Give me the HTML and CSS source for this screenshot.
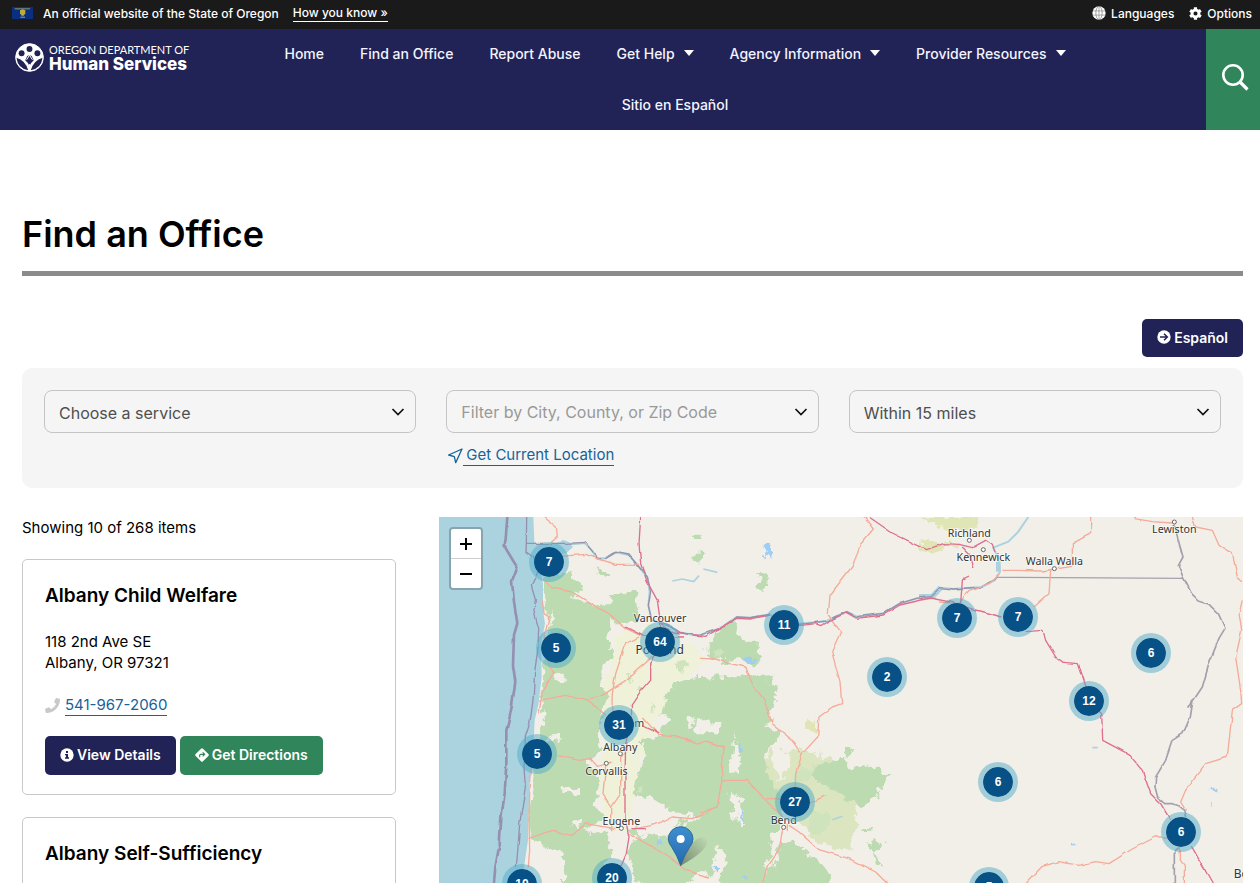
FILE: index.html
```html
<!DOCTYPE html>
<html lang="en">
<head>
<meta charset="utf-8">
<meta name="viewport" content="width=device-width, initial-scale=1">
<title>Find an Office</title>
<link rel="stylesheet" href="styles.css">
</head>
<body>
<div class="topbar">
  <svg class="flag" viewBox="0 0 63 36" aria-hidden="true"><rect width="63" height="36" fill="#0b2f80"/><path d="M8 4h46v3H8z" fill="#8f9a6b"/><path d="M24 10l8-3 8 3v9l-5 7h-6l-5-7z" fill="#b9ac3c"/><path d="M25 29h14v3H25z" fill="#a9a550"/></svg>
  <span>An official website of the State of Oregon</span>
  <button class="know" type="button">How you know »</button>
  <div class="tools">
    <button class="tool" type="button"><svg class="globe" viewBox="0 0 40 40" aria-hidden="true"><circle cx="20" cy="20" r="19" fill="#fff"/><path d="M20 1v38M2 14h36M2 26h36" fill="none" stroke="#8a8a8a" stroke-width="2"/><ellipse cx="20" cy="20" rx="9" ry="19" fill="none" stroke="#777" stroke-width="2"/></svg>Languages</button>
    <button class="tool" type="button"><svg class="gear" viewBox="0 0 512 512" aria-hidden="true"><path fill="#fff" fill-rule="evenodd" d="M487 316l-43-25q6-35 0-70l43-25q8-5 5-14-17-54-55-96-6-7-14-2l-43 25q-27-23-61-35V24q0-9-9-11-55-12-111 0-8 2-8 11v50q-34 12-61 35L87 84q-8-5-14 2-38 42-55 96-3 9 5 14l43 25q-6 35 0 70l-43 25q-8 5-5 14 17 54 55 96 6 7 14 2l43-25q27 23 61 35v50q0 9 8 11 56 12 111 0 9-2 9-11v-50q34-12 61-35l43 25q8 5 14-2 38-42 55-96 3-9-5-14zM256 336a80 80 0 1 1 0-160 80 80 0 0 1 0 160z"/></svg>Options</button>
  </div>
</div>
<header class="header">
  <a class="logo" href="#">
    <svg class="logo-mark" viewBox="0 0 88 88" aria-hidden="true"><circle cx="44" cy="44" r="42" fill="#fff"/><g fill="#212356"><circle cx="44" cy="18" r="9"/><circle cx="20" cy="31" r="9"/><circle cx="68" cy="31" r="9"/><path d="M4 45q28 8 36 38Q9 78 4 45zM84 45q-28 8-36 38 31-5 36-38zM44 37q8 0 9 8l4 7q-9 7-13 18-4-11-13-18l4-7q1-8 9-8z"/></g><path d="M44 37l-9 14M44 37l9 14M44 64v20" stroke="#fff" stroke-width="3" fill="none"/><circle cx="44" cy="44" r="42" fill="none" stroke="#fff" stroke-width="3"/></svg>
    <span class="logo-text"><span class="logo-top">OREGON DEPARTMENT OF</span><span class="logo-main">Human Services</span></span>
  </a>
  <nav class="nav">
    <a href="#">Home</a>
    <a href="#">Find an Office</a>
    <a href="#">Report Abuse</a>
    <a href="#">Get Help<span class="caret"></span></a>
    <a href="#">Agency Information<span class="caret"></span></a>
    <a href="#">Provider Resources<span class="caret"></span></a>
    <a href="#">Sitio en Español</a>
  </nav>
  <button class="search" type="button" aria-label="Search"><svg viewBox="0 0 27 27" aria-hidden="true"><circle cx="11" cy="11" r="9.7" fill="none" stroke="#fff" stroke-width="2.6"/><path d="M18 18l7.5 7.5" stroke="#fff" stroke-width="3.2"/></svg></button>
</header>
<main class="main">
  <h1>Find an Office</h1>
  <div class="actions"><a class="btn" href="#"><svg viewBox="0 0 42 42" aria-hidden="true"><circle cx="21" cy="21" r="20" fill="#fff"/><path d="M9 21h22M21 11l10 10-10 10" fill="none" stroke="#212356" stroke-width="4.5"/></svg>Español</a></div>
  <form class="filters">
    <div class="field">
      <select aria-label="Service"><option>Choose a service</option></select>
      <svg class="chev" viewBox="0 0 14 8" aria-hidden="true"><path d="M1.500 1L7 6.500 12.500 1" fill="none" stroke="#111" stroke-width="1.700"/></svg>
    </div>
    <div class="field">
      <input type="text" aria-label="Place" placeholder="Filter by City, County, or Zip Code">
      <svg class="chev" viewBox="0 0 14 8" aria-hidden="true"><path d="M1.500 1L7 6.500 12.500 1" fill="none" stroke="#111" stroke-width="1.700"/></svg>
      <a class="locate" href="#"><svg viewBox="0 0 48 48" aria-hidden="true"><path d="M45 3L5 21l17 5 4 18z" fill="none" stroke="#14639a" stroke-width="4" stroke-linejoin="round"/></svg><span class="locate-text">Get Current Location</span></a>
    </div>
    <div class="field">
      <select aria-label="Distance"><option>Within 15 miles</option></select>
      <svg class="chev" viewBox="0 0 14 8" aria-hidden="true"><path d="M1.500 1L7 6.500 12.500 1" fill="none" stroke="#111" stroke-width="1.700"/></svg>
    </div>
  </form>
  <div class="results">
    <section class="list">
      <p class="count">Showing 10 of 268 items</p>
      <article class="card">
        <h2>Albany Child Welfare</h2>
        <p class="address">118 2nd Ave SE<br>Albany, OR 97321</p>
        <p class="phone"><svg viewBox="0 0 512 512" aria-hidden="true"><path fill="#c9c9c9" d="M493 25L389 1q-18-4-26 13l-48 112q-6 16 7 28l60 50q-54 115-178 178l-50-60q-12-13-28-7L14 363q-17 8-13 26l24 104q4 19 24 19C305 512 512 305 512 49q0-20-19-24z"/></svg><a href="#">541-967-2060</a></p>
        <div class="buttons">
          <a class="btn" href="#"><svg viewBox="0 0 42 42" aria-hidden="true"><circle cx="21" cy="21" r="20" fill="#fff"/><path d="M18 9h6v6h-6zM15 18h9v10h3v4H15v-4h3v-6h-3z" fill="#212356"/></svg>View Details</a>
          <a class="btn green" href="#"><svg viewBox="0 0 42 42" aria-hidden="true"><path d="M21 1q2 0 3 1l16 16q3 3 0 6L24 40q-3 3-6 0L2 24q-3-3 0-6L18 2q1-1 3-1z" fill="#fff"/><path d="M14 28v-6q0-3 3-3h11M23 13l6 6-6 6" fill="none" stroke="#31855a" stroke-width="3.500"/></svg>Get Directions</a>
        </div>
      </article>
      <article class="card">
        <h2>Albany Self-Sufficiency</h2>
        <p class="address">&nbsp;</p>
      </article>
    </section>
    <section class="map" aria-label="Office map">
      <div class="canvas">
      <svg class="tiles" viewBox="0 0 2412 1098" aria-hidden="true">
        <defs>
          <filter id="rough" x="-5%" y="-5%" width="110%" height="110%"><feTurbulence type="fractalNoise" baseFrequency="0.035" numOctaves="4" seed="4"/><feDisplacementMap in="SourceGraphic" scale="46" xChannelSelector="R" yChannelSelector="G"/></filter>
          <filter id="wobble" x="-5%" y="-5%" width="110%" height="110%"><feTurbulence type="fractalNoise" baseFrequency="0.03" numOctaves="1" seed="9"/><feDisplacementMap in="SourceGraphic" scale="12" xChannelSelector="R" yChannelSelector="G"/></filter>
          <linearGradient id="pin" x1="0" y1="0" x2="0" y2="1"><stop offset="0" stop-color="#3f8fd0"/><stop offset="1" stop-color="#2369ad"/></linearGradient>
          <linearGradient id="shade" x1="0" y1="1" x2="1" y2="0"><stop offset="0" stop-color="#333" stop-opacity=".5"/><stop offset="1" stop-color="#333" stop-opacity="0"/></linearGradient>
        </defs>
        <rect width="2412" height="1098" fill="#f2efe9"/>
        <!-- valley farmland -->
        <g filter="url(#rough)" fill="#eff1d8">
          <path d="M530 350L600 345 640 320 700 350 780 400 800 440 740 480 680 530 660 600 640 660 600 730 590 850 560 950 500 920 480 780 500 650 480 560 520 440z"/>
          <path d="M990 700L1090 690 1180 730 1260 840 1240 1000 1140 980 1020 860 970 780z" fill="#dbe5bf"/>
          <path d="M1095 605h30v42h-30zM1440 0h170l10 30-70 10-80-20zM1440 80l70-8 50 16-60 8-60 14z" fill="#dfe5b4"/>
        </g>
        <!-- forests -->
        <g filter="url(#rough)" fill="#bddbb1">
          <path d="M318 184L355 164 402 174 412 200 445 210 400 235 442 256 480 272 520 262 512 240 570 220 600 232 590 270 600 310 540 320 510 300 512 370 520 420 490 450 490 500 510 540 490 600 470 650 480 690 450 740 480 800 470 870 500 900 440 940 500 955 520 1000 500 1050 480 1110 375 1110 375 1010 300 980 272 960 274 870 280 800 290 720 300 620 304 560 316 440 330 320 315 240z"/>
          <path d="M476 156h34v18h-34zM955 165h30v20h10l-12 36h-20z"/>
          <path d="M803 384L870 314 890 312 896 345 915 370 962 374 964 444 930 450 900 424 850 434 803 414z"/>
          <path d="M655 590L690 520 720 500 783 480 850 482 1000 470 1012 560 990 590 985 630 1020 650 975 710 985 760 1015 820 1030 900 1010 960 1000 1110 860 1110 800 1060 720 1110 600 1110 560 1000 600 960 560 940 620 910 700 920 790 900 720 890 650 850 580 830 590 790 620 720 610 670 655 660 690 600z"/>
          <path d="M1143 740L1215 726 1235 760 1283 742 1320 760 1348 780 1320 815 1310 850 1273 870 1230 850 1180 810 1120 790z"/>
          <path d="M1040 960L1160 1050 1185 1110 980 1110zM1270 930h30v14h-30zM1290 970l50 10-40 30 40 30-30 8z"/>
          <path d="M770 100h22v30h-22zM765 50h20v18h-20zM1210 690l34 8-22 30z"/>
        </g>
        <g filter="url(#rough)" fill="#cfe3bd">
          <path d="M560 470l20 8-10 14zM600 500l14 20-20 6zM700 440l30-10 20 14-30 16zM640 560l10 20-16 8zM530 600l16 20-14 10zM600 800l10 20-20 10zM820 400l40 10-20 20zM1080 740l60 20-30 40-40-10zM1120 880l60 20-30 60-50-20z"/>
        </g>
        <g filter="url(#rough)" fill="#f2efe9">
          <path d="M283 985L370 1005 375 1060 340 1110 270 1110zM370 810h50v18h-50zM770 616h70v30h-70zM340 280l10 30-20 4zM350 470h30v22h-30zM335 655h30v18h-30zM295 590h22v30h-22zM885 650l20 80-10 50-18-20zM870 820l36 30 10 80-20 0-16-70zM600 880l90 15 50 40-80 30-70-20zM1010 660l50 70-40 60-20-60zM400 912h28v20h-28z"/>
          <path d="M1010 940l25 20-30 70-30 50 20-90zM830 980l30 40-20 80-20-10zM740 600h24v20h-24z"/>
        </g>
        <!-- ocean -->
        <path d="M0 0H283L286 75 310 85 380 72 402 90 380 110 300 110 302 150 312 200 312 280 318 320 306 380 308 480 298 564 287 610 282 719 272 799 269 880 267 970 255 1050 242 1098H0z" fill="#aad3df"/>
        <g fill="none" stroke="#aad3df" stroke-linejoin="round">
          <path d="M350 90L372 72 400 82 438 78 458 100 475 124 500 124 530 106 570 114 600 150 625 180 632 224 628 265 638 310 690 326 720 346 777 356 843 334 893 300 933 302 993 292 1033 324 1130 316 1163 312 1223 284 1253 299 1333 289 1383 259 1433 244 1473 239 1503 212 1543 216 1628 210 1668 189 1683 164 1678 124 1663 92 1708 74 1738 44 1768 0" stroke-width="6"/>
          <path d="M1440 239L1480 239 1505 212" stroke-width="16"/>
          <path d="M1678 164v-30" stroke-width="14"/>
        </g>
        <g filter="url(#rough)" fill="#9fcdf5">
          <path d="M966 90l20-6 14 16-8 26-18-12zM916 420h26v24h-26zM783 100l14 4-6 10zM896 690h16v16h-16zM903 870l12 40-4 20-10-20zM830 1050h10v14h-10zM910 1065l16 8-10 12zM650 970h18v8h-18zM2315 812h20v10h-20zM2320 855h4v20h-4zM1895 978h8v8h-8z"/>
        </g>
        <path d="M700 192l30-6 34 8 16-18M793 156l42 10M1960 692h16M1180 908l30-10" fill="none" stroke="#aad3df" stroke-width="5"/>
        <!-- borders -->
        <g filter="url(#wobble)" fill="none" stroke-linejoin="round">
          <path d="M205 0L200 64 197 89 235 152 219 194 225 254 235 319 225 354 222 444 229 494 219 564 212 600 202 640 202 740 197 830 187 900 182 980 169 1050 165 1098" stroke="#9590b0" stroke-width="8"/>
          <path d="M263 0L262 79 261 104 287 124 302 154 287 184 277 204 289 244 285 284 299 334 297 394 287 464 282 550 272 620 259 660 255 750 259 810 242 920 237 990 232 1050" stroke="#9590b0" stroke-width="4"/>
          <path d="M262 79H380L438 76 458 100 480 126 500 124 530 106 570 114 600 150 625 180 635 224 628 265 638 310 690 326 720 346 777 356 843 334 893 300 933 302 993 292M1080 322L1163 312 1223 284 1253 299 1333 289 1383 259 1433 244 1473 239 1503 212 1543 216 1628 210 1673 182" stroke="#9492ad" stroke-width="4"/>
          <path d="M2203 10L2218 70 2232 120 2218 146 2233 182 2258 230 2280 252 2310 262 2338 290 2358 334 2340 364 2310 440 2290 510 2250 570 2262 549 2254 600 2232 650 2200 670 2180 730 2150 780 2148 810 2156 840 2180 860 2200 860 2216 866 2234 880 2240 900M2222 995L2206 1010V1098" stroke="#a4a0ae" stroke-width="5"/>
        </g>
        <path d="M1673 181L2233 184" stroke="#a4a0ae" stroke-width="4"/>
        <!-- trunk roads -->
        <g filter="url(#wobble)" fill="none" stroke="#f5ab99" stroke-width="4" stroke-linejoin="round">
          <path d="M315 0L352 30 355 60 330 82M335 120L440 112 480 126 530 142 600 142M318 190L335 212 400 225 460 262 510 290 560 334 610 358M310 250L315 290 330 300 318 350 322 420 345 470 310 520 300 590M300 550L380 535 440 550 490 535 560 490 640 420M600 360L560 380 530 470 520 530 518 600M440 549L500 590"/>
          <path d="M1275 0L1303 36 1263 84 1243 144 1173 234 1168 294 1205 344 1178 404 1203 494 1208 560 1180 570 1140 600 1136 660 1090 710 1070 770 1067 860M975 549L1000 620 1060 670 1085 706M783 424L830 426 870 440 920 450 940 500 975 549M610 600L660 655 720 660 780 680 800 672 855 690 848 770 848 790 925 790 990 860 1032 900M848 790L835 870 783 886M783 680L740 670M970 844L1030 846M1110 860L1160 836M1050 925L1080 945 1140 998 1230 1025 1310 1065 1350 1105M1032 930L1020 1000 985 1050 970 1100M1045 920v22"/>
          <path d="M355 715L420 730 455 725 475 748 520 735M500 745L492 830 518 870 545 830 545 720 560 710M268 965L340 940 400 955 440 920 530 935M278 745L272 830 270 900 272 1000 268 1050M590 935L640 925 700 900 760 905 810 885M570 950L640 990 690 1020 740 1060 810 1080M518 870V940"/>
          <path d="M2082 4L2140 14 2200 18M2260 0L2270 30 2320 40 2340 85 2380 110 2395 180 2412 195M2410 250L2400 290 2408 340 2390 420 2405 520 2408 560 2380 580 2365 720 2300 740 2260 790 2240 820 2225 855 2240 880M1955 0V50L1900 80V150M1690 160L1730 160 1810 162 1900 148M1835 160L1830 230 1785 270M1500 255L1560 260 1590 220 1650 200 1680 170M1762 1098L1810 1048 1860 1034 1920 1045 1970 1034 2010 1040 2080 996 2150 960 2190 960M2224 980V1030L2236 1045V1098"/>
        </g>
        <!-- motorways -->
        <g filter="url(#wobble)" fill="none" stroke="#de6f8d" stroke-width="4" stroke-linejoin="round">
          <path d="M605 0L600 80 605 140 625 195 655 250 665 320 660 400 635 440 635 490 600 530 577 564 578 600 560 680 558 780 558 900 570 960 562 1010 545 1050M665 320L700 345 800 358 893 304 933 306 993 294M1080 326L1130 320 1145 326 1163 315 1223 287 1253 304 1333 294 1383 264 1473 243 1540 256 1598 276 1690 300M560 330L615 358 735 360M1290 0L1360 48 1463 98 1513 80 1560 82 1600 92 1640 70 1660 85 1668 105M1565 260L1570 190 1590 180M1570 90L1590 110 1605 150M1760 344L1812 340 1820 370 1850 420 1873 436 1918 440 1935 490 1955 560 1988 590 1991 670 2070 712 2110 760 2135 830 2165 860 2195 910M2256 985L2290 1045 2320 1098M610 625L660 650M580 935H620"/>
        </g>
        <g fill="#fff" stroke="#666" stroke-width="3">
          <circle cx="544" cy="710" r="6"/><circle cx="502" cy="739" r="6"/><circle cx="547" cy="934" r="6"/><circle cx="1034" cy="931" r="6"/><circle cx="1591" cy="70" r="6"/><circle cx="1633" cy="98" r="6"/><circle cx="1846" cy="155" r="6"/><circle cx="2206" cy="15" r="6"/>
        </g>
        <g class="places">
          <text x="663" y="314">Vancouver</text>
          <text x="662" y="410" font-size="36">Portland</text>
          <text x="570" y="629">Salem</text>
          <text x="544" y="701">Albany</text>
          <text x="502" y="774">Corvallis</text>
          <text x="547" y="923">Eugene</text>
          <text x="1034" y="920">Bend</text>
          <text x="1591" y="59">Richland</text>
          <text x="1633" y="132">Kennewick</text>
          <text x="1846" y="143">Walla Walla</text>
          <text x="2206" y="49">Lewiston</text>
          <text x="2430" y="1082" font-size="36">Boise</text>
        </g>
        <path d="M725 1046Q740 990 775 965 800 955 805 975 800 1005 725 1046z" fill="url(#shade)"/>
        <path d="M725 1046Q715 1016 699 992 688 978 688 966A37 37 0 0 1 762 966Q762 978 751 992 735 1016 725 1046z" fill="url(#pin)" stroke="#2e6c97" stroke-width="3"/>
        <circle cx="725" cy="966" r="12" fill="#fff"/>
      </svg>
      <button class="cluster" style="left:110px;top:45px">7</button>
      <button class="cluster" style="left:117px;top:131px">5</button>
      <button class="cluster" style="left:221px;top:125px">64</button>
      <button class="cluster" style="left:345px;top:108px">11</button>
      <button class="cluster" style="left:448px;top:160px">2</button>
      <button class="cluster" style="left:518px;top:101px">7</button>
      <button class="cluster" style="left:579px;top:100px">7</button>
      <button class="cluster" style="left:712px;top:136px">6</button>
      <button class="cluster" style="left:650px;top:184px">12</button>
      <button class="cluster" style="left:180px;top:208px">31</button>
      <button class="cluster" style="left:98px;top:237px">5</button>
      <button class="cluster" style="left:356px;top:285px">27</button>
      <button class="cluster" style="left:559px;top:265px">6</button>
      <button class="cluster" style="left:742px;top:315px">6</button>
      <button class="cluster" style="left:83px;top:367px">10</button>
      <button class="cluster" style="left:173px;top:361px">20</button>
      <button class="cluster" style="left:550px;top:370px">5</button>
      </div>
      <div class="zoom"><button type="button" aria-label="Zoom in"><svg viewBox="0 0 14 14" aria-hidden="true"><path d="M7 1v12M1 7h12" stroke="#000" stroke-width="2"/></svg></button><button type="button" aria-label="Zoom out"><svg viewBox="0 0 14 14" aria-hidden="true"><path d="M1 7h12" stroke="#000" stroke-width="2"/></svg></button></div>
    </section>
  </div>
</main>
</body>
</html>
```
FILE: styles.css
```css
* { box-sizing: border-box; }
body {
  margin: 0;
  height: 100vh;
  overflow: hidden;
  display: flex;
  flex-direction: column;
  background: #fff;
  color: #000;
  font-family: Inter, "Liberation Sans", sans-serif;
  font-size: 15px;
  line-height: 21px;
}
button { font: inherit; color: inherit; border: 0; padding: 0; background: none; cursor: pointer; }
h1, h2, p { margin: 0; }
a { text-decoration: none; }

.topbar {
  flex: none;
  display: flex;
  align-items: center;
  height: 29px;
  padding: 0 8px 3px 12px;
  background: #1a1a1a;
  color: #fff;
  font-size: 12px;
  font-weight: 500;
  line-height: 17px;
}
.flag { width: 21px; height: 12px; margin-right: 10px; }
.know { margin-left: 14px; border-bottom: 1px solid #fff; }
.tools { display: flex; gap: 15px; margin-left: auto; }
.tool { display: flex; align-items: center; gap: 5px; }
.globe { width: 14px; height: 14px; }
.gear { width: 13px; height: 13px; }

.header { flex: none; display: flex; background: #212356; color: #f4f4ff; }
.logo { flex: none; display: flex; align-items: flex-start; width: 222px; padding: 14px 0 0 15px; color: #fff; }
.logo-mark { width: 29px; height: 29px; margin-right: 5px; }
.logo-text { display: flex; flex-direction: column; font-family: Lato, sans-serif; }
.logo-top { font-size: 11px; line-height: 14px; }
.logo-main { font-family: Inter, sans-serif; font-size: 17px; font-weight: 800; line-height: 14px; }
.nav {
  flex: 1;
  display: flex;
  flex-wrap: wrap;
  justify-content: center;
  gap: 1px 36px;
  padding: 0 78px 0 0;
  font-size: 14px;
  font-weight: 500;
}
.nav a { display: flex; align-items: center; padding-bottom: 2px; color: inherit; height: 50px; white-space: nowrap; }
.caret { margin-left: 9px; border: 5px solid transparent; border-top: 6px solid #fff; border-bottom: 0; }
.search { flex: none; width: 54px; padding-bottom: 4px; background: #31855a; }
.search svg { width: 27px; height: 27px; margin: 0 4px 0 9px; vertical-align: middle; }

.main { flex: 1; min-height: 0; display: flex; flex-direction: column; padding: 82px 17px 0 22px; }
h1 { flex: none; padding-bottom: 15px; border-bottom: 5px solid #8b8b8b; font-size: 36px; font-weight: 600; line-height: 44px; }
.actions { flex: none; display: flex; justify-content: flex-end; padding: 43px 0 11px; }
.btn {
  display: flex;
  align-items: center;
  gap: 3px;
  height: 38px;
  padding: 0 15px 2px;
  border-radius: 5px;
  background: #212356;
  color: #fff;
  font-size: 14px;
  font-weight: 600;
  white-space: nowrap;
}
.btn svg { width: 14px; height: 14px; }
.btn.green { background: #31855a; }

.filters {
  flex: none;
  display: grid;
  grid-template-columns: repeat(3, 1fr);
  gap: 30px;
  min-height: 120px;
  padding: 22px;
  border-radius: 10px;
  background: #f5f5f5;
}
.field { display: grid; grid-template-columns: 1fr 25px; grid-template-rows: 43px auto; align-content: start; align-items: center; }
.field select, .field input {
  grid-area: 1 / 1 / 2 / 3;
  appearance: none;
  width: 100%;
  height: 43px;
  padding: 2px 14px 0;
  border: 1px solid #c4c6c4;
  border-radius: 8px;
  background: transparent;
  color: #4f4f4f;
  font: 16px/24px Inter, sans-serif;
}
.field input { padding-top: 0; }
.field input::placeholder { color: #999; opacity: 1; }
.chev { grid-area: 1 / 2 / 2 / 3; width: 14px; height: 8px; pointer-events: none; }
.locate { grid-area: 2 / 1 / 3 / 3; display: flex; align-items: center; justify-self: start; padding: 12px 0 0 1px; color: #14639a; }
.locate svg { width: 16px; height: 16px; }
.locate-text { padding-left: 3px; border-bottom: 1px solid #14639a; line-height: 20px; }

.results { flex: 1; min-height: 0; display: grid; grid-template-columns: 374fr 804fr; column-gap: 43px; padding-top: 29px; }
.list { display: flex; flex-direction: column; gap: 22px; min-height: 0; overflow: hidden; }
.count { flex: none; margin-bottom: -1px; }
.card { flex: none; padding: 24px 22px 19px; border: 1px solid #c9c9c9; border-radius: 5px; }
h2 { font-size: 19px; font-weight: 600; line-height: 24px; }
.address { padding-top: 23px; }
.phone { display: flex; align-items: center; gap: 5px; padding-top: 22px; }
.phone svg { width: 15px; height: 15px; }
.phone a { border-bottom: 1px solid #14639a; color: #14639a; line-height: 20px; }
.buttons { display: flex; gap: 4px; padding-top: 20px; }
.buttons .btn { height: 39px; }

.map { position: relative; min-height: 0; overflow: hidden; background: #f2efe9; }
.canvas { position: absolute; inset: 0; font-family: "Liberation Sans", sans-serif; }
.tiles { width: 804px; height: 366px; display: block; }
.places { font-family: "Noto Sans", sans-serif; font-size: 32px; fill: #333; stroke: #fff; stroke-width: 5px; stroke-opacity: .6; paint-order: stroke; text-anchor: middle; }
.cluster {
  position: absolute;
  width: 40px;
  height: 40px;
  margin: -20px 0 0 -20px;
  border: 5px solid rgba(80, 172, 202, .5);
  border-radius: 50%;
  background: #075187 padding-box;
  color: #fff;
  font-size: 12px;
  font-weight: 700;
  text-align: center;
}
.zoom { position: absolute; top: 10px; left: 10px; display: flex; flex-direction: column; border: 2px solid #86a5af; border-radius: 4px; background: #fff; }
.zoom button { display: grid; place-items: center; width: 30px; height: 29px; }
.zoom button:first-child { height: 30px; border-bottom: 1px solid #ccc; }
.zoom svg { width: 14px; height: 14px; }
```
